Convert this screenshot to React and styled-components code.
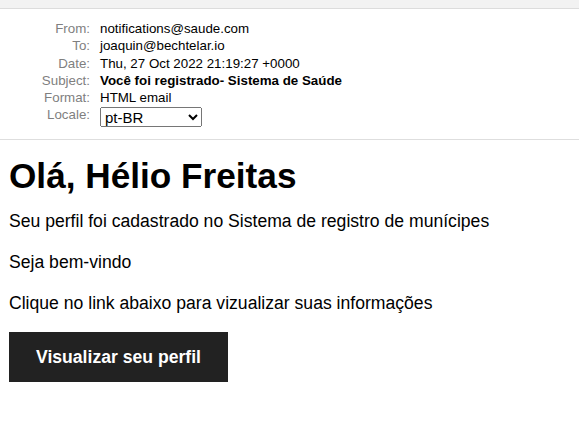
import React from "react";
import styled, { createGlobalStyle } from "styled-components";

const Global = createGlobalStyle`
  html, body { margin: 0; padding: 0; background: #fff; }
  body { font-family: "Liberation Sans", Arial, sans-serif; color: #000; }
`;

const TopBand = styled.div`
  height: 8px;
  background: #f2f2f2;
  border-bottom: 1px solid #dcdcdc;
`;

const Header = styled.header`
  padding: 11px 0 0 0;
  border-bottom: 1px solid #dedede;
  font: 13.33px/15.3px "Liberation Sans", Arial, sans-serif;
`;

const Meta = styled.dl`
  display: grid;
  grid-template-columns: 82px 1fr;
  column-gap: 10px;
  margin: 0 0 10.5px 8px;
  padding: 0;
`;

const Label = styled.dt`
  text-align: right;
  color: #7f7f7f;
  padding: 1px 0;
`;

const Value = styled.dd`
  margin: 0;
  padding: 1px 0;
  font-weight: ${(p) => (p.$bold ? "bold" : "normal")};
`;

const Select = styled.select`
  display: block;
  font: 15px "Liberation Sans", Arial, sans-serif;
  width: 102px;
  height: 20px;
  margin: 0;
`;

const Body = styled.main`
  display: flex;
  flex-direction: column;
  align-items: flex-start;
  gap: 18px;
  padding: 0 9px;
`;

const Title = styled.h1`
  font-size: 35.2px;
  font-weight: bold;
  margin: 16px 0 -4px;
`;

const Para = styled.p`
  font-size: 17.6px;
  line-height: 23px;
  margin: 0;
`;

const Button = styled.a`
  display: inline-block;
  margin-top: -1px;
  background: #222222;
  color: #fff;
  font-weight: bold;
  font-size: 17.6px;
  line-height: 50px;
  padding: 0 27px;
  text-decoration: none;
`;

export default function App() {
  return (
    <>
      <Global />
      <TopBand />
      <Header>
        <Meta>
          <Label>From:</Label>
          <Value>notifications@saude.com</Value>
          <Label>To:</Label>
          <Value>joaquin@bechtelar.io</Value>
          <Label>Date:</Label>
          <Value>Thu, 27 Oct 2022 21:19:27 +0000</Value>
          <Label>Subject:</Label>
          <Value $bold>Você foi registrado- Sistema de Saúde</Value>
          <Label>Format:</Label>
          <Value>HTML email</Value>
          <Label>Locale:</Label>
          <Value>
            <Select defaultValue="pt-BR">
              <option value="pt-BR">pt-BR</option>
            </Select>
          </Value>
        </Meta>
      </Header>
      <Body>
        <Title>Olá, Hélio Freitas</Title>
        <Para>Seu perfil foi cadastrado no Sistema de registro de munícipes</Para>
        <Para>Seja bem-vindo</Para>
        <Para>Clique no link abaixo para vizualizar suas informações</Para>
        <Button href="#">Visualizar seu perfil</Button>
      </Body>
    </>
  );
}
